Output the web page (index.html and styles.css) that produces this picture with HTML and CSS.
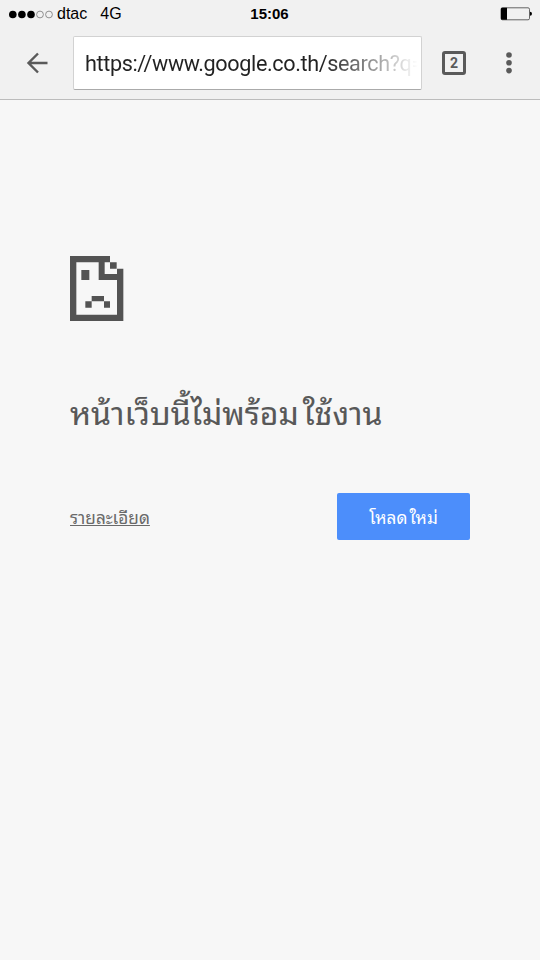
FILE: index.html
```
<!DOCTYPE html>
<html lang="th">
<head>
  <meta charset="UTF-8" />
  <meta name="viewport" content="width=device-width, initial-scale=1.0"/>
  <title>google.co.th</title>
  <link rel="stylesheet" href="styles.css">
</head>
<body>
  <header>
    <div class="status-bar">
      <div class="carrier">
        <svg class="signal" width="44" height="9" viewBox="0 0 44 9">
          <circle cx="3.8" cy="4.5" r="3.8"/>
          <circle cx="12.9" cy="4.5" r="3.8"/>
          <circle cx="22" cy="4.5" r="3.8"/>
          <circle class="empty" cx="31" cy="4.5" r="3.4"/>
          <circle class="empty" cx="40" cy="4.5" r="3.4"/>
        </svg>
        <span class="name">dtac</span>
        <span>4G</span>
      </div>
      <div class="clock">15:06</div>
      <svg class="battery" width="33" height="14" viewBox="0 0 33 14">
        <rect x="1" y="0.8" width="28.5" height="12" rx="1.5" fill="none" stroke="#555" stroke-width="0.9"/>
        <path d="M2 0.8H7V12.8H2Q1 12.8 1 11.8V1.8Q1 0.8 2 0.8Z"/>
        <path d="M30 4.8Q32 5 32 6.8Q32 8.6 30 8.8Z"/>
      </svg>
    </div>

    <div class="toolbar">
      <svg class="back" width="22" height="22" viewBox="0 0 22 22">
        <path d="M21.5 11H2.5M12 1.5L2.5 11L12 20.5" fill="none" stroke="#5a5a5a" stroke-width="2.4"/>
      </svg>
      <div class="address"><span>https://www.google.co.th/search?q=</span></div>
      <div class="tabs">2</div>
      <svg class="more" width="6" height="22" viewBox="0 0 6 22">
        <circle cx="3" cy="3" r="2.8"/>
        <circle cx="3" cy="10.8" r="2.8"/>
        <circle cx="3" cy="18.6" r="2.8"/>
      </svg>
    </div>
  </header>

  <main>
    <svg class="sad-page" width="54" height="65" viewBox="0 0 162 195">
      <path fill-rule="evenodd" d="M0 0H120V19H140V38H160V195H0ZM19 19V176H141V72H86V19ZM104 19V54H141V38H120V19Z"/>
      <path d="M34 42H58V72H34ZM65 120H102V136H120V155H102V136H65V155H46V136H65Z"/>
    </svg>
    <h1>หน้าเว็บนี้ไม่พร้อม<span class="word">ใช้งาน</span></h1>
    <div class="actions">
      <a href="#" class="details">รายละเอียด</a>
      <button>โหลด<span class="word">ใหม่</span></button>
    </div>
  </main>
</body>
</html>
```
FILE: styles.css
```
* {
  margin: 0;
  padding: 0;
  box-sizing: border-box;
}

body {
  min-height: 100vh;
  background: #f7f7f7;
  color: #585858;
  font-family: "Noto Sans Thai Looped", Loma, Garuda, "Noto Sans", "Liberation Sans", sans-serif;
}

header {
  height: 100px;
  background: #f1f1f1;
  border-bottom: 1px solid #bcbcbc;
}

.status-bar {
  display: grid;
  grid-template-columns: 1fr auto 1fr;
  align-items: center;
  height: 28px;
  padding: 0 7px 0 9px;
  color: #000;
  font: 16px/28px "Liberation Sans", sans-serif;
}

.carrier {
  display: flex;
  align-items: center;
}

.signal .empty {
  fill: none;
  stroke: #777;
  stroke-width: 0.8;
}

.name {
  margin: 0 13px 0 4px;
}

.clock {
  margin-right: 3px;
  font-weight: bold;
  font-size: 15px;
}

.battery {
  justify-self: end;
}

.toolbar {
  display: flex;
  align-items: center;
  height: 70px;
  padding: 0 28px 0 26px;
}

.address {
  width: 349px;
  height: 54px;
  margin-left: 25px;
  padding-top: 1px;
  padding-left: 11px;
  background: #fff;
  border: 1px solid #d2d2d2;
  border-bottom-color: #aaa;
  border-radius: 2px;
  font: 21.6px/52px Roboto, sans-serif;
  letter-spacing: -0.37px;
}

.address span {
  display: block;
  white-space: nowrap;
  background: linear-gradient(to right, #222 71%, #fff 99%);
  background-clip: text;
  -webkit-background-clip: text;
  color: transparent;
}

.tabs {
  width: 24px;
  height: 24px;
  margin-left: 20px;
  border: 3px solid #5a5a5a;
  border-radius: 3px;
  color: #5a5a5a;
  font: bold 14px/18px Roboto, sans-serif;
  text-align: center;
}

.more {
  margin-left: auto;
  fill: #5a5a5a;
}

main {
  padding: 156px 70px 0;
}

.sad-page {
  display: block;
  fill: #535353;
}

h1 {
  height: 50px;
  margin-top: 65px;
  font-size: 32px;
  font-weight: normal;
  line-height: 50px;
  white-space: nowrap;
  -webkit-text-stroke: 0.1px #585858;
}

.word {
  margin-left: 0.12em;
}

.actions {
  display: flex;
  justify-content: space-between;
  align-items: center;
  margin-top: 57px;
}

.details {
  padding-bottom: 2px;
  color: #696969;
  font-size: 17.2px;
}

button {
  width: 133px;
  height: 47px;
  padding-bottom: 2px;
  background: #4c8efb;
  border: none;
  border-radius: 2px;
  color: #fff;
  font-family: inherit;
  font-size: 17.2px;
}
```
